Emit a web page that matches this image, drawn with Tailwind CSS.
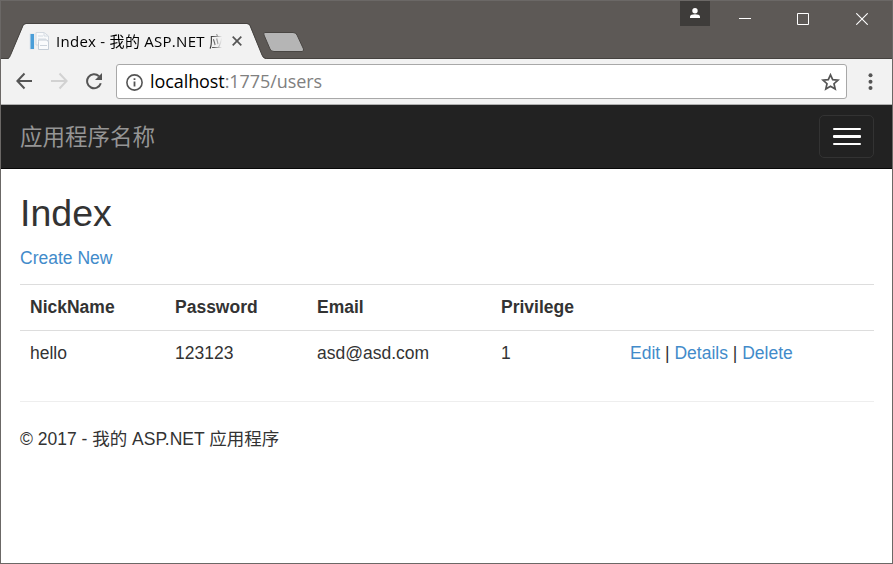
<!DOCTYPE html>
<html lang="zh">
<head>
<meta charset="utf-8">
<title>Index - 我的 ASP.NET 应用程序</title>
<script src="https://cdn.jsdelivr.net/npm/@tailwindcss/browser@4"></script>
</head>
<body class="h-[564px] w-[893px] overflow-hidden bg-white">
<div class="flex h-[564px] w-[893px] flex-col border border-[#6b6866] bg-white">
  <!-- Title bar -->
  <div class="relative flex h-[58px] shrink-0 items-start bg-[#5d5956]">
    <svg class="absolute left-0 top-0" width="891" height="58" viewBox="1 1 891 58">
      <path d="M1 58.5H892" stroke="#45423f"/>
      <path d="M8 59C10 58 10 56 11 54L23 26Q24 24 26 24H247Q249 24 250 26L262 55Q263 59 267 59Z" fill="#f2f2f2"/>
      <path d="M8 58.5C10 57 10 56 11 54L23 25.500Q24 23.500 26 23.500H247Q249 23.500 250 25.500L262 55Q263 58 266 58.500" fill="none" stroke="#45423f"/>
      <path d="M265 32.500H293Q296 32.500 297 35L303.500 49Q304 51.500 302 51.500H274Q271 51.500 270 49L264 35Q263 32.500 265 32.500Z" fill="#b5b5b5" stroke="#494643"/>
    </svg>
    <div class="relative mt-[22px] ml-[28px] flex h-[35px] w-[216px] items-center">
      <svg width="21" height="20" viewBox="0 0 21 20" class="shrink-0">
        <path d="M7 1.500H15L19.500 5V14H7Z" fill="#f9fafb" stroke="#d3d9e0"/>
        <path d="M0.500 2.500H5.500V18.500H0.500Z" fill="#e1e7ed"/>
        <path d="M1.500 3H5V18H1.500Z" fill="#4a9ed8"/>
        <path d="M9 5H14M9 8H17M15 2V5H19" fill="none" stroke="#d4dbe2"/>
        <path d="M9.500 10.500V9H18L19.500 11V18.500H9.500Z" fill="#fafbfc" stroke="#c5cdd6"/>
        <path d="M11 14.500H18" stroke="#cdd4dc"/>
      </svg>
      <div class="ml-[6px] h-[20px] w-[166px] overflow-hidden whitespace-nowrap bg-gradient-to-r from-black from-90% to-[#f2f2f2] bg-clip-text font-['Open_Sans','Noto_Sans_CJK_SC',sans-serif] text-[15px] leading-[20px] tracking-[0.27px] text-transparent">Index - 我的 ASP.NET 应</div>
      <svg class="ml-[10px] shrink-0" width="10" height="10" viewBox="0 0 10 10"><path d="M0.700 0.700L9.300 9.300M9.300 0.700L0.700 9.300" stroke="#555" stroke-width="1.700"/></svg>
    </div>
    <div class="relative ml-auto flex h-full">
      <div class="mr-[29px] flex h-[25px] w-[30px] justify-center bg-[#3e3c3a] pt-[7px]">
        <svg width="12" height="12" viewBox="0 0 12 12" fill="#fff"><circle cx="6" cy="2.700" r="2.700"/><path d="M1 10V8.500C1 5.500 11 5.500 11 8.500V10Z"/></svg>
      </div>
      <svg class="mt-[11px]" width="12" height="14" viewBox="0 0 12 14"><path d="M0 6.500H12" stroke="#fff"/></svg>
      <svg class="mt-[12px] ml-[46px]" width="12" height="12" viewBox="0 0 12 12"><path d="M.5.5H11.500V11.500H.5Z" fill="none" stroke="#fff"/></svg>
      <svg class="mt-[12px] mr-[24px] ml-[47px]" width="12" height="12" viewBox="0 0 12 12"><path d="M.3.300L11.700 11.700M11.700.3L.3 11.700" stroke="#fff" stroke-width="1.100"/></svg>
    </div>
  </div>
  <!-- Toolbar -->
  <div class="flex h-[46px] shrink-0 items-start border-b border-[#b0b0b0] bg-[#f2f2f2] pt-[5px]">
    <svg class="mt-[8px] ml-[15px]" width="17" height="18" viewBox="0 0 17 18" fill="none" stroke="#555" stroke-width="2"><path d="M16 9H1.500M8.500 1.500L1.400 9L8.500 16.500"/></svg>
    <svg class="mt-[8px] ml-[18px]" width="17" height="18" viewBox="0 0 17 18" fill="none" stroke="#d2d2d2" stroke-width="2"><path d="M0 9H15M8.500 1.500L15.600 9L8.500 16.500"/></svg>
    <svg class="mt-[8px] ml-[17px]" width="18" height="18" viewBox="0 0 18 18"><path d="M15.800 11.300A7 7 0 1 1 14 4.200" fill="none" stroke="#555" stroke-width="2"/><path d="M17 1V8H10Z" fill="#555"/></svg>
    <div class="ml-[13px] flex h-[35px] w-[731px] items-center rounded-[3px] border border-[#a8a8a8] bg-white">
      <svg class="ml-[9px] mt-[1px] shrink-0" width="17" height="17" viewBox="0 0 17 17"><circle cx="8.500" cy="8.500" r="7.600" fill="none" stroke="#555" stroke-width="1.600"/><path d="M8.500 7.500V12.500M8.500 4.300V6" stroke="#555" stroke-width="1.800"/></svg>
      <div class="mb-[2px] ml-[7px] font-['Open_Sans',sans-serif] text-[18px] leading-[24px] tracking-[-0.08px] whitespace-nowrap text-[#808080]"><span class="text-black">localhost</span>:1775/users</div>
      <svg class="mr-[6px] ml-auto" width="19" height="18" viewBox="0 0 19 18"><path d="M9.500 1.800L11.700 6.700L17 7.200L13 10.700L14.200 16L9.500 13.200L4.800 16L6 10.700L2 7.200L7.300 6.700Z" fill="none" stroke="#555" stroke-width="1.700"/></svg>
    </div>
    <svg class="mt-[9px] ml-[21px]" width="5" height="18" viewBox="0 0 5 18" fill="#555"><circle cx="2.500" cy="2.300" r="2"/><circle cx="2.500" cy="8.700" r="2"/><circle cx="2.500" cy="15" r="2"/></svg>
  </div>
  <!-- Site navigation -->
  <div class="flex h-[64px] shrink-0 items-center justify-between border-b border-[#080808] bg-[#222] pr-[18px] pl-[19px]">
    <a class="mb-[2px] font-['Noto_Sans_CJK_SC',sans-serif] text-[22.5px] leading-[25px] text-[#959595]">应用程序名称</a>
    <button class="flex h-[43px] w-[55px] flex-col items-center justify-center gap-[5px] rounded-[5px] border border-[#333]" aria-label="Menu">
      <span class="h-[2.500px] w-[28px] rounded-[1px] bg-white"></span>
      <span class="h-[2.500px] w-[28px] rounded-[1px] bg-white"></span>
      <span class="h-[2.500px] w-[28px] rounded-[1px] bg-white"></span>
    </button>
  </div>
  <!-- Page body -->
  <div class="flex flex-col pr-[18px] pl-[19px] font-['Liberation_Sans','Noto_Sans_CJK_SC',sans-serif] text-[17.5px] leading-[25px] text-[#333]">
    <h2 class="mt-[24px] text-[37.5px] leading-[41px]">Index</h2>
    <p class="mt-[12px] mb-[13px]"><a class="text-[#428bca]">Create New</a></p>
    <table class="w-full table-fixed border-collapse text-left">
      <colgroup><col class="w-[145px]"><col class="w-[142px]"><col class="w-[184px]"><col class="w-[129px]"><col></colgroup>
      <tr class="h-[46px] border-t border-[#ddd]"><th class="px-[10px]">NickName</th><th class="px-[10px]">Password</th><th class="px-[10px]">Email</th><th class="px-[10px]">Privilege</th><th></th></tr>
      <tr class="h-[46px] border-t border-[#ddd]"><td class="px-[10px]">hello</td><td class="px-[10px]">123123</td><td class="px-[10px]">asd@asd.com</td><td class="px-[10px]">1</td><td class="px-[10px]"><a class="text-[#428bca]">Edit</a> | <a class="text-[#428bca]">Details</a> | <a class="text-[#428bca]">Delete</a></td></tr>
    </table>
    <hr class="mt-[24px] border-[#eee]">
    <footer class="mt-[25px]">© 2017 - 我的 ASP.NET 应用程序</footer>
  </div>
</div>
</body>
</html>
